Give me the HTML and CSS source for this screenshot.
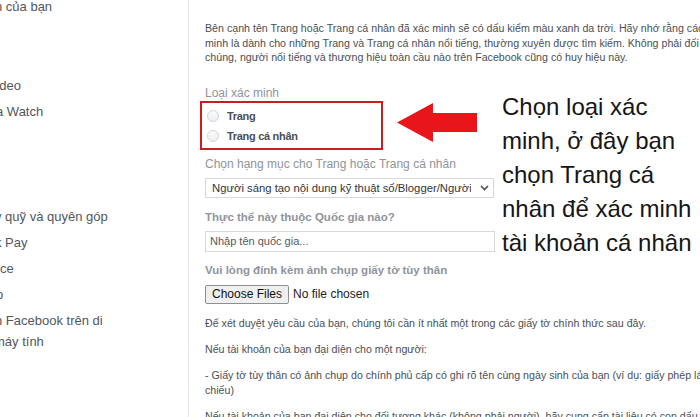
FILE: index.html
```html
<!DOCTYPE html>
<html lang="vi">
<head>
<meta charset="utf-8">
<title>Yêu cầu xác minh</title>
<link rel="stylesheet" href="styles.css">
</head>
<body>
<div class="page">
  <nav class="sidebar">
    <div class="row first"><span class="cut5">n của bạn</span></div>
    <div class="row"></div>
    <div class="row"></div>
    <div class="row"><span class="cut12">Video</span></div>
    <div class="row"><span class="cut4">a Watch</span></div>
    <div class="row"></div>
    <div class="row"></div>
    <div class="row"></div>
    <div class="row"><span class="cut5">y quỹ và quyên góp</span></div>
    <div class="row"><span class="cut5">k Pay</span></div>
    <div class="row"><span>ce</span></div>
    <div class="row"><span class="cut4">o</span></div>
    <div class="row"><span class="cut5">n Facebook trên di</span></div>
    <div class="row2"><span class="cut6">máy tính</span></div>
  </nav>

  <main class="main">
    <div class="desc">
      <div class="line">Bên cạnh tên Trang hoặc Trang cá nhân đã xác minh sẽ có dấu kiểm màu xanh da trời. Hãy nhớ rằng các huy hiệu xác</div>
      <div class="line">minh là dành cho những Trang và Trang cá nhân nổi tiếng, thường xuyên được tìm kiếm. Không phải đối tượng công</div>
      <div class="line">chúng, người nổi tiếng và thương hiệu toàn cầu nào trên Facebook cũng có huy hiệu này.</div>
    </div>

    <div class="label first-label">Loại xác minh</div>
    <div class="redbox">
      <label class="radio-row"><input type="radio" name="type" class="radio"><span>Trang</span></label>
      <label class="radio-row"><input type="radio" name="type" class="radio"><span>Trang cá nhân</span></label>
    </div>

    <div class="label gap6">Chọn hạng mục cho Trang hoặc Trang cá nhân</div>
    <div class="select">
      <span class="select-text">Người sáng tạo nội dung kỹ thuật số/Blogger/Người có ảnh hưởng</span>
      <svg class="chev" width="9" height="6" viewBox="0 0 9 6"><path d="M1 1 L4.5 4.5 L8 1" fill="none" stroke="#4b4f56" stroke-width="1.6"/></svg>
    </div>

    <div class="label bold gap11">Thực thể này thuộc Quốc gia nào?</div>
    <input class="text-input" type="text" placeholder="Nhập tên quốc gia...">

    <div class="label bold gap10">Vui lòng đính kèm ảnh chụp giấy tờ tùy thân</div>
    <div class="file-row">
      <button class="file-btn" type="button">Choose Files</button>
      <span class="file-none">No file chosen</span>
    </div>

    <div class="info">
      <p class="para">Để xét duyệt yêu cầu của bạn, chúng tôi cần ít nhất một trong các giấy tờ chính thức sau đây.</p>
      <p class="para">Nếu tài khoản của bạn đại diện cho một người:</p>
      <p class="para"><span class="line">- Giấy tờ tùy thân có ảnh chụp do chính phủ cấp có ghi rõ tên cùng ngày sinh của bạn (ví dụ: giấy phép lái xe, hộ</span><span class="line">chiếu)</span></p>
      <p class="para">Nếu tài khoản của bạn đại diện cho đối tượng khác (không phải người), hãy cung cấp tài liệu có con dấu chính thức</p>
    </div>
  </main>
</div>

<svg class="arrow" width="86" height="46" viewBox="0 0 86 46">
  <polygon points="2,22.5 38,3 38,13 82,13 82,32 38,32 38,42" fill="#e8151b"/>
</svg>

<div class="note">Chọn loại xác<br>minh, ở đây bạn<br>chọn Trang cá<br>nhân để xác minh<br>tài khoản cá nhân</div>
</body>
</html>
```

FILE: styles.css
```css
html, body {
  margin: 0;
  padding: 0;
  background: #ffffff;
}
body {
  width: 700px;
  height: 417px;
  overflow: hidden;
  position: relative;
  font-family: "Liberation Sans", Arial, sans-serif;
  color: #4b4f56;
}
.page {
  display: flex;
  height: 417px;
  overflow: hidden;
}
.sidebar {
  width: 188px;
  flex: 0 0 188px;
  border-right: 1px solid #e3e4e6;
  overflow: hidden;
  font-size: 13px;
  color: #53565c;
}
.row {
  height: 26.2px;
  line-height: 26.2px;
  white-space: nowrap;
}
.row.first {
  margin-top: -6px;
}
.row2 {
  height: 21px;
  line-height: 21px;
  margin-top: -3px;
  white-space: nowrap;
}
.row span, .row2 span {
  display: inline-block;
}
.cut4 { margin-left: -4px; }
.cut5 { margin-left: -5px; }
.cut6 { margin-left: -6px; }
.cut12 { margin-left: -12px; }

.main {
  flex: 1 1 auto;
  min-width: 0;
  padding: 21px 0 0 16px;
  display: flex;
  flex-direction: column;
  align-items: flex-start;
}
.main > * {
  flex-shrink: 0;
}
.desc {
  font-size: 10.65px;
  line-height: 14.5px;
  color: #4b4f56;
}
.line {
  display: block;
  white-space: nowrap;
}
.label {
  font-size: 12px;
  line-height: 16px;
  color: #90949c;
  white-space: nowrap;
}
.label.bold {
  font-weight: bold;
  font-size: 11.5px;
}
.first-label { margin-top: 20px; }
.gap6 { margin-top: 6px; }
.gap10 { margin-top: 10px; }
.gap11 { margin-top: 11px; }

.redbox {
  margin-left: -5px;
  width: 174px;
  height: 42px;
  border: 2px solid #cf1a1f;
  padding: 3px 0 0 5px;
  box-sizing: content-box;
  display: flex;
  flex-direction: column;
}
.radio-row {
  display: flex;
  align-items: center;
  gap: 8px;
  height: 20px;
  flex-shrink: 0;
  font-size: 11px;
  font-weight: bold;
  letter-spacing: -0.3px;
  color: #4b4f56;
}
.radio {
  appearance: none;
  -webkit-appearance: none;
  margin: 0;
  width: 12px;
  height: 12px;
  border-radius: 50%;
  border: 1px solid #d3d5d8;
  background: linear-gradient(#fbfbfb, #eceef0);
  box-sizing: border-box;
}

.select {
  margin-top: 6px;
  width: 289px;
  height: 20px;
  border: 1px solid #d6d8dc;
  box-sizing: border-box;
  display: flex;
  align-items: center;
  padding: 0 4px 0 6px;
  gap: 9px;
  background: #fff;
}
.select-text {
  flex: 1 1 auto;
  min-width: 0;
  overflow: hidden;
  white-space: nowrap;
  font-size: 11.3px;
  color: #333639;
}
.chev {
  flex: 0 0 auto;
}

.text-input {
  margin-top: 6px;
  width: 290px;
  height: 21px;
  border: 1px solid #d6d8dc;
  box-sizing: border-box;
  padding: 0 4px;
  font-family: "Liberation Sans", Arial, sans-serif;
  font-size: 11px;
  color: #333;
  outline: none;
}
.text-input::placeholder {
  color: #55585d;
}

.file-row {
  margin-top: 7px;
  display: flex;
  align-items: center;
  gap: 4px;
}
.file-btn {
  height: 19px;
  padding: 0 6px;
  border: 1px solid #8f8f8f;
  border-radius: 2px;
  background: #efefef;
  font-family: "Liberation Sans", Arial, sans-serif;
  font-size: 12px;
  color: #111;
  line-height: 17px;
}
.file-none {
  font-size: 12px;
  color: #222;
}

.info {
  margin-top: 12px;
  font-size: 10.65px;
  line-height: 15px;
  color: #4b4f56;
}
.para {
  margin: 0 0 11px 0;
  white-space: nowrap;
}

.arrow {
  position: absolute;
  left: 395px;
  top: 100px;
}
.note {
  position: absolute;
  left: 502px;
  top: 90px;
  font-size: 24px;
  line-height: 34px;
  color: #161616;
  white-space: nowrap;
}
```
